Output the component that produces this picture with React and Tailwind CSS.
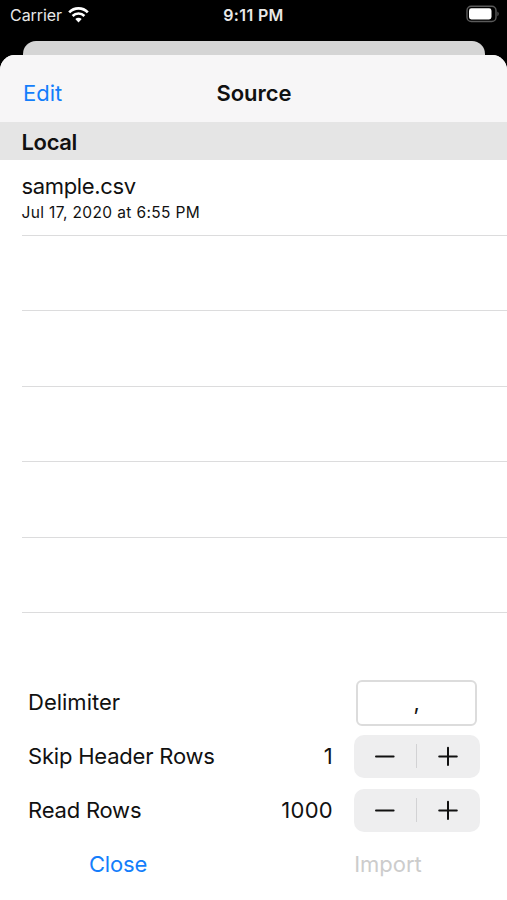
import React from "react";

const WifiIcon = () => (
  <svg width="21" height="16" viewBox="0 0 21 16" fill="none" stroke="white">
    <path d="M1.2 5.4C6.3 0.1 14.7 0.1 19.8 5.4" strokeWidth="2.7" />
    <path d="M4.6 9C7.8 5.7 13.2 5.7 16.4 9" strokeWidth="2.6" />
    <path d="M7.3 12.1C9.1 10.3 11.9 10.3 13.7 12.1L10.5 15.4Z" fill="white" stroke="none" />
  </svg>
);

const BatteryIcon = () => (
  <svg width="34" height="18" viewBox="0 0 34 18">
    <rect x="1" y="1.3" width="29" height="15.2" rx="4.2" fill="none" stroke="#5a5a5a" strokeWidth="1.4" />
    <rect x="3" y="3.3" width="22.5" height="11.2" rx="2.4" fill="white" />
    <path d="M31.4 6.6C33.2 7.4 33.2 10.4 31.4 11.2Z" fill="#5a5a5a" />
  </svg>
);

const Stepper = () => (
  <div className="flex h-[43px] w-[126.5px] items-center rounded-[10px] bg-[#eeeeef]">
    <button className="flex w-[62px] justify-center">
      <svg width="20" height="20" viewBox="0 0 20 20" stroke="#111" strokeWidth="2" strokeLinecap="round">
        <path d="M1 10.5H18.6" />
      </svg>
    </button>
    <div className="h-6 w-px bg-[#d2d2d4]" />
    <button className="flex w-[63px] justify-center">
      <svg width="20" height="20" viewBox="0 0 20 20" stroke="#111" strokeWidth="2" strokeLinecap="round">
        <path d="M1.2 10.5H18.8M10 1.7V19" />
      </svg>
    </button>
  </div>
);

const StepperRow = ({ label, value }) => (
  <div className="flex h-[54px] items-center pl-[28px] pr-[27px]">
    <span className="flex-1 pt-px">{label}</span>
    <span className="mr-[20.5px] pt-px tracking-[0.3px]">{value}</span>
    <Stepper />
  </div>
);

const emptyRows = [1, 2, 3, 4, 5];

const App = () => {
  return (
    <div className="flex h-[900px] w-[507px] flex-col overflow-hidden bg-black font-['Inter',sans-serif] text-[22px] tracking-[-0.2px] text-[#111]">
      <div className="grid h-[41px] grid-cols-3 pt-[5px] text-[16px] leading-5 text-[#e8e8e8]">
        <div className="flex items-start gap-[6px] pl-[10px]">
          <span className="tracking-[-0.05px]">Carrier</span>
          <span className="pt-[2px]"><WifiIcon /></span>
        </div>
        <div className="text-center font-semibold tracking-[0.35px]">9:11 PM</div>
        <div className="flex justify-end pr-[7px]"><BatteryIcon /></div>
      </div>

      <div className="ml-[23px] mr-[22px] h-[14px] shrink-0 rounded-t-[13px] bg-[#d5d5d5]" />

      <div className="flex flex-1 flex-col overflow-hidden rounded-t-[15px] bg-white">
        <div className="grid h-[67px] shrink-0 grid-cols-3 items-center bg-[#f7f6f7] pl-[23px] pr-[22px] pt-[9px]">
          <button className="text-left tracking-[0] text-[#147efb]">Edit</button>
          <h1 className="text-center font-semibold tracking-[-0.05px]">Source</h1>
        </div>
        <div className="flex h-[38px] shrink-0 items-center bg-[#e5e5e5] pl-[21.5px] pt-[2px] font-semibold tracking-[-0.35px]">Local</div>

        <div className="pl-[21.5px]">
          <div className="h-[76px] border-b border-[#dcdcdd] pt-[13px]">
            <div className="leading-[26px] tracking-[-0.35px]">sample.csv</div>
            <div className="pt-px text-[15.5px] leading-[26px] tracking-[0.37px]">Jul 17, 2020 at 6:55 PM</div>
          </div>
          {emptyRows.map((row) => (
            <div key={row} className="h-[75.4px] border-b border-[#dcdcdd]" />
          ))}
        </div>

        <div className="mt-auto pb-[9px]">
          <div className="flex h-[54px] items-center justify-between pl-[28px] pr-[30px]">
            <span className="pt-px tracking-[0]">Delimiter</span>
            <div className="mt-px flex h-[46px] w-[121px] items-center justify-center rounded-[6px] border-2 border-[#dcdcdc]">,</div>
          </div>
          <StepperRow label="Skip Header Rows" value="1" />
          <StepperRow label="Read Rows" value="1000" />
          <div className="flex h-[54px] items-center">
            <button className="w-[236px] text-center text-[#147efb]">Close</button>
            <button className="ml-[33px] flex-1 text-center tracking-[0] text-[#cccccc]">Import</button>
          </div>
        </div>
      </div>
    </div>
  );
};

export default App;
